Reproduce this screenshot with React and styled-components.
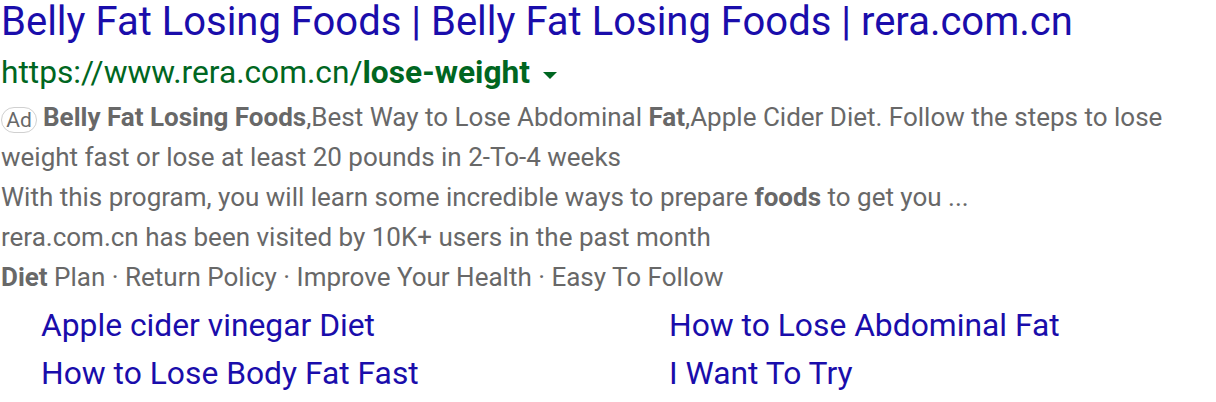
import React from 'react';
import styled, { createGlobalStyle } from 'styled-components';

const GlobalStyle = createGlobalStyle`
  body {
    margin: 0;
    background: #fff;
    font-family: Roboto, "Liberation Sans", Arial, sans-serif;
  }
`;

const Result = styled.div`
  width: 1216px;
  padding: 0 0 0 1px;
`;

const Title = styled.a`
  display: block;
  color: #1a0dab;
  font-size: 40px;
  line-height: 44px;
  text-decoration: none;
  white-space: nowrap;
`;

const UrlRow = styled.div`
  display: flex;
  align-items: center;
  margin-top: 9px;
  color: #006621;
  font-size: 31.7px;
  line-height: 40px;
  white-space: nowrap;
  b {
    font-weight: 700;
  }
`;

const Caret = styled.span`
  width: 0;
  height: 0;
  margin-left: 13px;
  margin-top: 4px;
  border-left: 7px solid transparent;
  border-right: 7px solid transparent;
  border-top: 7px solid #006621;
`;

const Snippet = styled.div`
  margin-top: 4px;
  color: #686868;
  font-size: 26px;
  line-height: 40px;
  white-space: nowrap;
  b {
    font-weight: 700;
  }
`;

const AdBadge = styled.span`
  display: inline-block;
  box-sizing: border-box;
  width: 36px;
  height: 26px;
  margin-right: 6px;
  border: 1px solid #d0d0d0;
  border-radius: 13px;
  font-size: 21px;
  line-height: 24px;
  text-align: center;
  vertical-align: -1px;
  color: #686868;
`;

const Sitelinks = styled.div`
  display: grid;
  grid-template-columns: 628px 1fr;
  padding-left: 40px;
  margin-top: 4px;
`;

const Sitelink = styled.a`
  color: #1a0dab;
  font-size: 31.8px;
  line-height: 48px;
  text-decoration: none;
  white-space: nowrap;
`;

const links = [
  'Apple cider vinegar Diet',
  'How to Lose Abdominal Fat',
  'How to Lose Body Fat Fast',
  'I Want To Try',
];

export default function App() {
  return (
    <>
      <GlobalStyle />
      <Result>
        <Title href="#">Belly Fat Losing Foods | Belly Fat Losing Foods | rera.com.cn</Title>
        <UrlRow>
          <span>
            https://www.rera.com.cn/<b>lose-weight</b>
          </span>
          <Caret />
        </UrlRow>
        <Snippet>
          <div>
            <AdBadge>Ad</AdBadge>
            <b>Belly Fat Losing Foods</b>,Best Way to Lose Abdominal <b>Fat</b>,Apple Cider Diet. Follow the steps to lose
            <br />
            weight fast or lose at least 20 pounds in 2-To-4 weeks
          </div>
          <div>
            With this program, you will learn some incredible ways to prepare <b>foods</b> to get you ...
          </div>
          <div>rera.com.cn has been visited by 10K+ users in the past month</div>
          <div>
            <b>Diet</b> Plan · Return Policy · Improve Your Health · Easy To Follow
          </div>
        </Snippet>
        <Sitelinks>
          {links.map((l) => (
            <Sitelink href="#" key={l}>
              {l}
            </Sitelink>
          ))}
        </Sitelinks>
      </Result>
    </>
  );
}
